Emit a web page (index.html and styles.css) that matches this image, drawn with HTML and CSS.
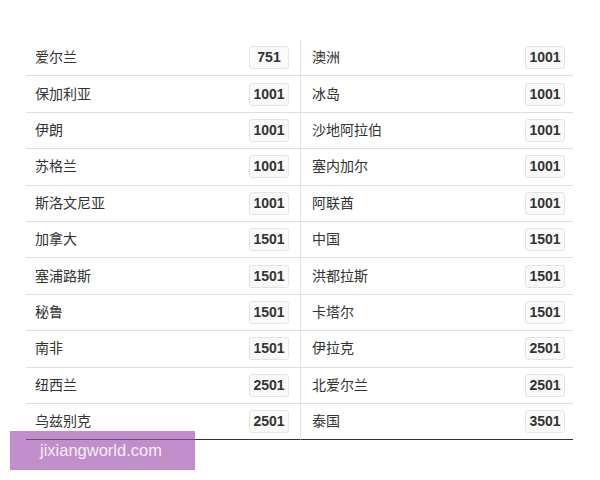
FILE: index.html
```html
<!DOCTYPE html>
<html lang="zh">
<head>
<meta charset="utf-8">
<link rel="stylesheet" href="styles.css">
</head>
<body>
<div class="table">
  <div class="cell left"><span class="name">爱尔兰</span><span class="badge">751</span></div>
  <div class="cell right"><span class="name">澳洲</span><span class="badge">1001</span></div>
  <div class="cell left"><span class="name">保加利亚</span><span class="badge">1001</span></div>
  <div class="cell right"><span class="name">冰岛</span><span class="badge">1001</span></div>
  <div class="cell left"><span class="name">伊朗</span><span class="badge">1001</span></div>
  <div class="cell right"><span class="name">沙地阿拉伯</span><span class="badge">1001</span></div>
  <div class="cell left"><span class="name">苏格兰</span><span class="badge">1001</span></div>
  <div class="cell right"><span class="name">塞内加尔</span><span class="badge">1001</span></div>
  <div class="cell left"><span class="name">斯洛文尼亚</span><span class="badge">1001</span></div>
  <div class="cell right"><span class="name">阿联酋</span><span class="badge">1001</span></div>
  <div class="cell left"><span class="name">加拿大</span><span class="badge">1501</span></div>
  <div class="cell right"><span class="name">中国</span><span class="badge">1501</span></div>
  <div class="cell left"><span class="name">塞浦路斯</span><span class="badge">1501</span></div>
  <div class="cell right"><span class="name">洪都拉斯</span><span class="badge">1501</span></div>
  <div class="cell left"><span class="name">秘鲁</span><span class="badge">1501</span></div>
  <div class="cell right"><span class="name">卡塔尔</span><span class="badge">1501</span></div>
  <div class="cell left"><span class="name">南非</span><span class="badge">1501</span></div>
  <div class="cell right"><span class="name">伊拉克</span><span class="badge">2501</span></div>
  <div class="cell left"><span class="name">纽西兰</span><span class="badge">2501</span></div>
  <div class="cell right"><span class="name">北爱尔兰</span><span class="badge">2501</span></div>
  <div class="cell left last"><span class="name">乌兹别克</span><span class="badge">2501</span></div>
  <div class="cell right last"><span class="name">泰国</span><span class="badge">3501</span></div>
</div>
<div class="watermark">jixiangworld.com</div>
</body>
</html>
```

FILE: styles.css
```css
html, body {
  margin: 0;
  padding: 0;
  background: #ffffff;
}
body {
  width: 600px;
  height: 480px;
  position: relative;
  overflow: hidden;
  font-family: "Liberation Sans", "Noto Sans CJK SC", sans-serif;
  color: #333333;
}
.table {
  margin: 40px 0 0 26px;
  width: 547px;
  display: grid;
  grid-template-columns: 275px 272px;
  grid-auto-rows: 36.4px;
}
.cell {
  box-sizing: border-box;
  display: flex;
  align-items: center;
  justify-content: space-between;
  border-bottom: 1px solid #dedede;
}
.cell.left {
  padding: 0 11px 0 9px;
  border-right: 1px solid #e4e4e4;
}
.cell.right {
  padding: 0 8px 0 11px;
}
.cell.last {
  border-bottom-color: #333333;
}
.name {
  font-family: "Noto Sans CJK SC", sans-serif;
  font-size: 14px;
  line-height: 14px;
  padding-bottom: 3px;
  color: #333333;
}
.badge {
  box-sizing: border-box;
  width: 40px;
  height: 23px;
  line-height: 21px;
  text-align: center;
  font-family: "Liberation Sans", sans-serif;
  font-weight: bold;
  font-size: 14px;
  color: #333333;
  background: #fafafa;
  border: 1px solid #e4e4e4;
  border-radius: 3px;
}
.watermark {
  position: absolute;
  left: 10px;
  top: 431px;
  width: 185px;
  height: 39px;
  box-sizing: border-box;
  padding-left: 30px;
  line-height: 38px;
  background: rgba(158, 83, 175, 0.65);
  color: #f7eef9;
  font-family: "Liberation Sans", sans-serif;
  font-size: 16.5px;
}
```
